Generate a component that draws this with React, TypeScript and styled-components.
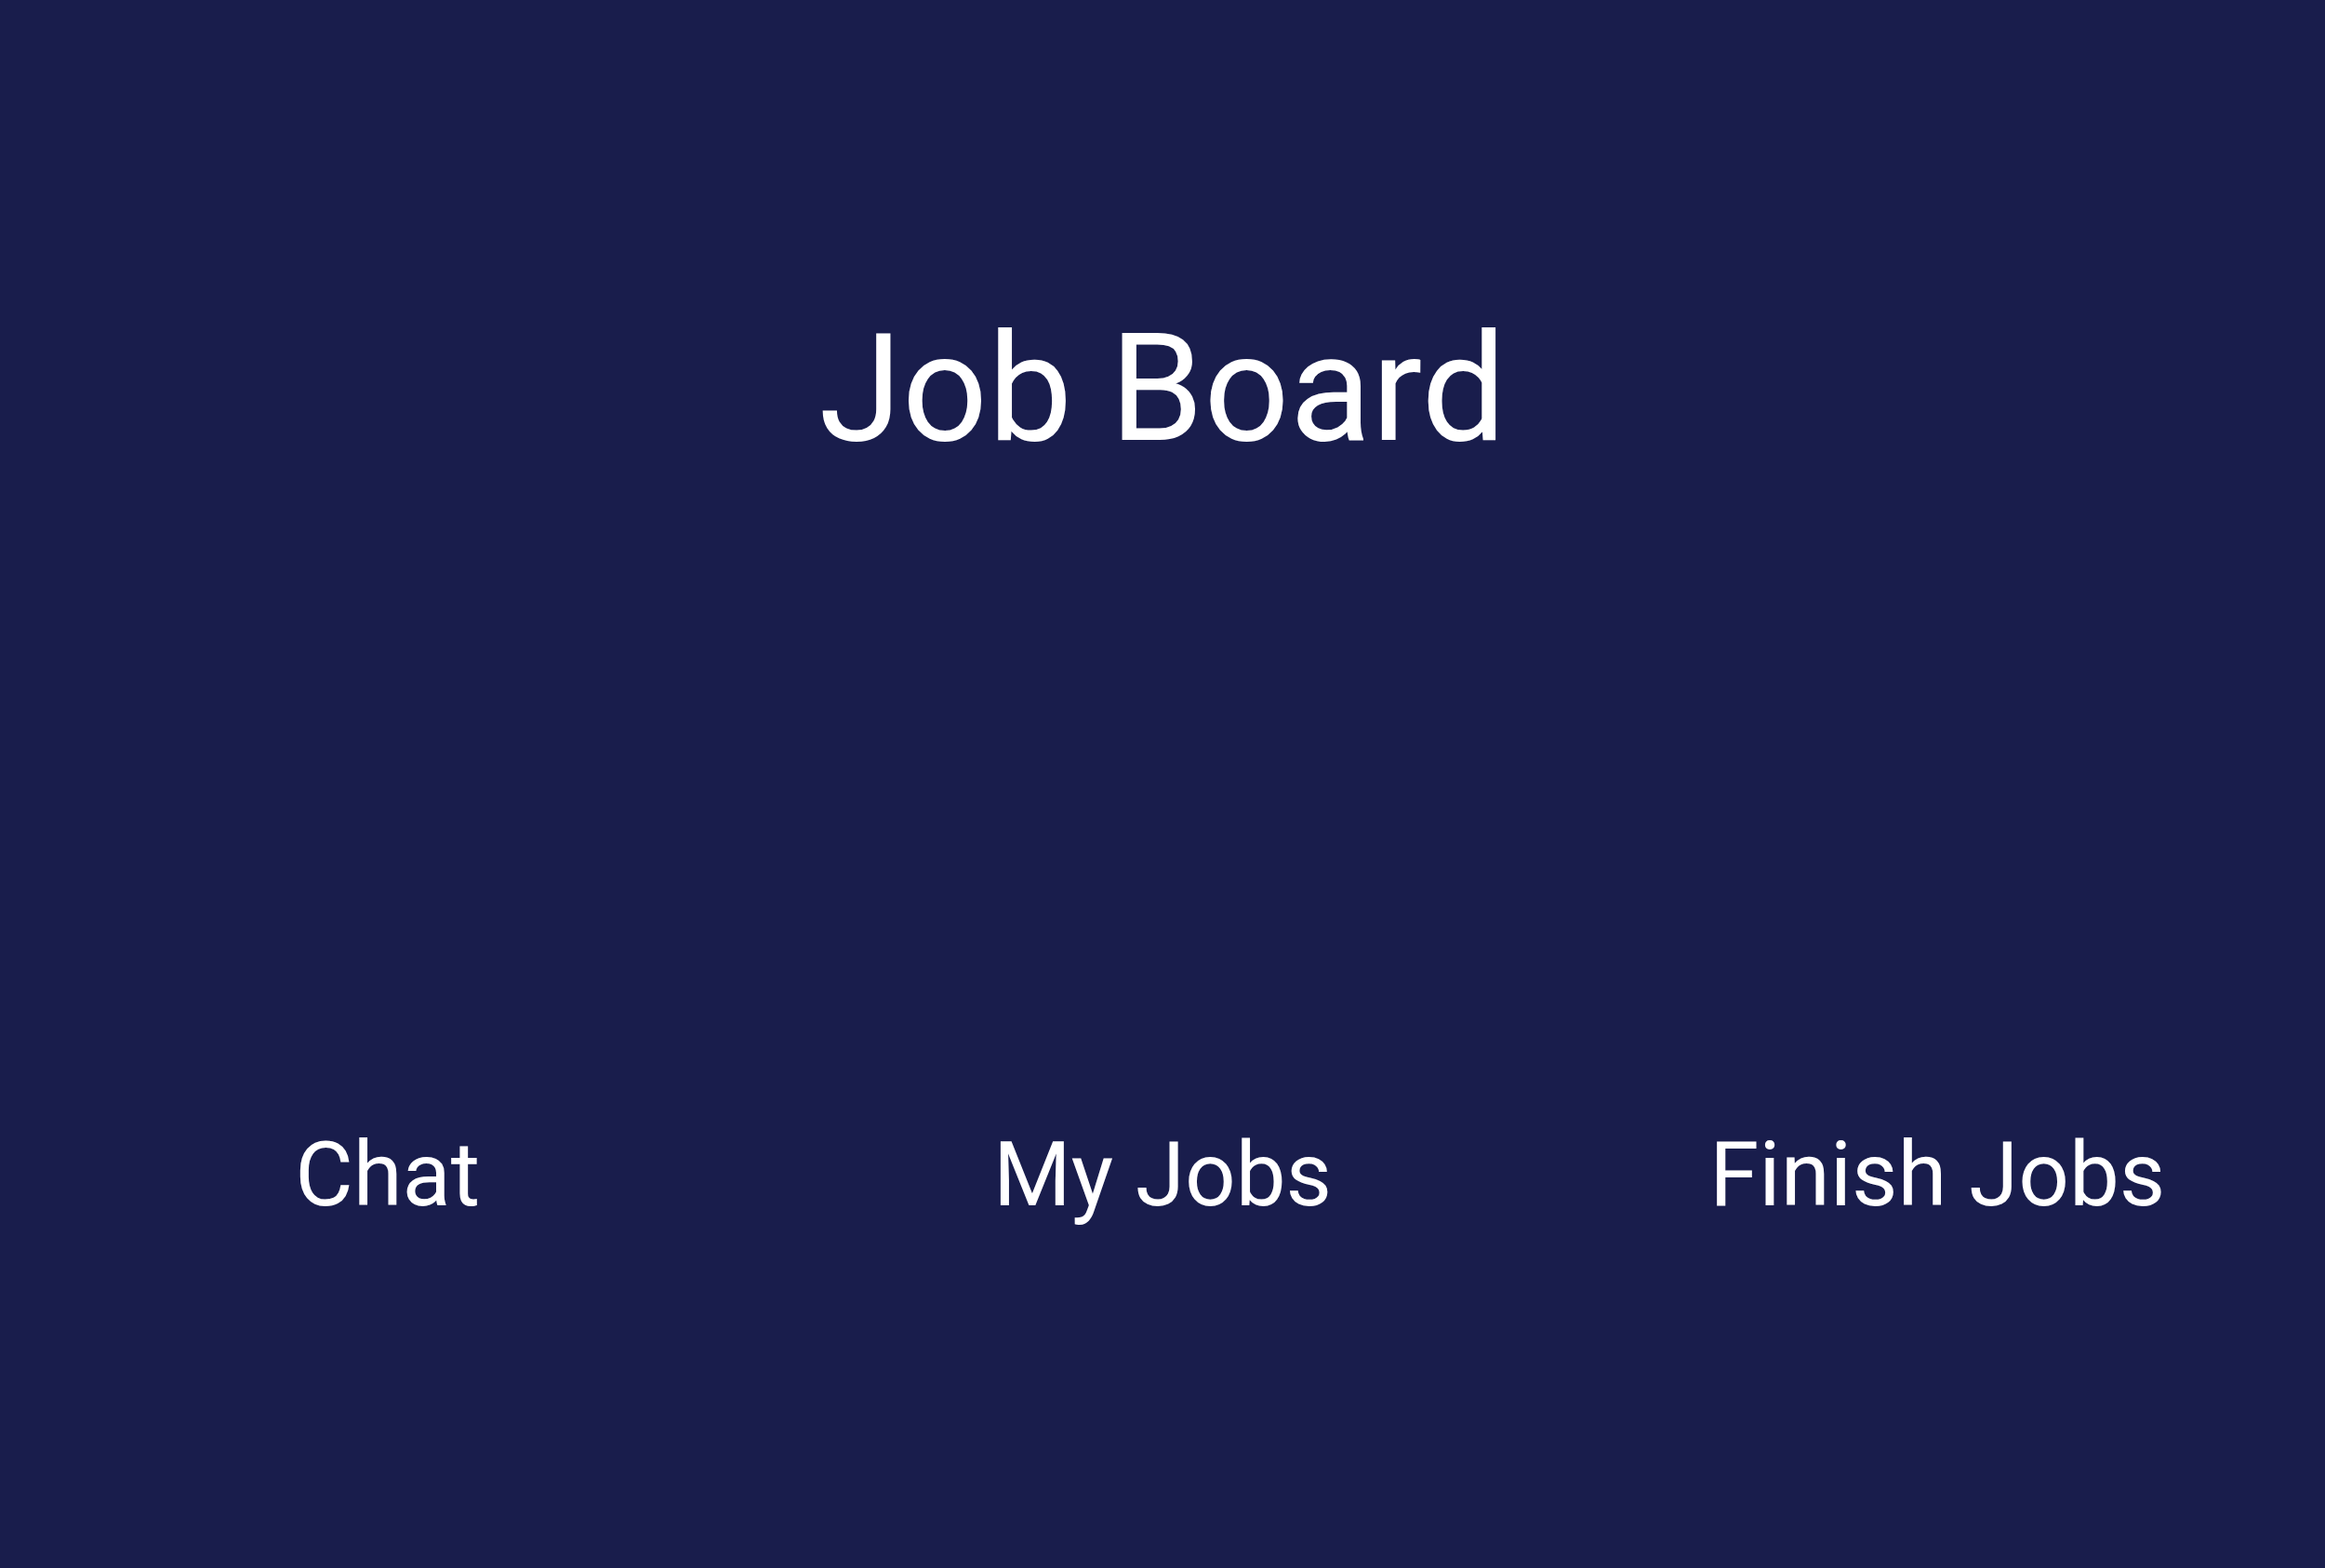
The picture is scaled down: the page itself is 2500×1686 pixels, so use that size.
import React from "react";
import styled, { createGlobalStyle } from "styled-components";

const GlobalStyle = createGlobalStyle`
  body {
    margin: 0;
    background: #191d4c;
    font-family: Roboto, "Liberation Sans", sans-serif;
    color: #ffffff;
  }
`;

const Page = styled.main`
  display: grid;
  grid-template-rows: 1fr 1fr;
  min-height: 100vh;
`;

const Hero = styled.header`
  display: flex;
  align-items: center;
  justify-content: center;
  padding-bottom: 8px;
`;

const Title = styled.h1`
  margin: 0;
  font-size: 162px;
  line-height: 192px;
  font-weight: 400;
`;

const Menu = styled.nav`
  display: grid;
  grid-template-columns: repeat(3, 1fr);
  padding-bottom: 4px;
`;

const MenuButton = styled.button`
  padding: 0;
  border: 0;
  background: transparent;
  color: inherit;
  font: inherit;
  font-size: 96px;
  line-height: 112px;
  cursor: pointer;
`;

const items = ["Chat", "My Jobs", "Finish Jobs"];

export default function App() {
  return (
    <Page>
      <GlobalStyle />
      <Hero>
        <Title>Job Board</Title>
      </Hero>
      <Menu>
        {items.map((item) => (
          <MenuButton key={item} type="button">
            {item}
          </MenuButton>
        ))}
      </Menu>
    </Page>
  );
}
